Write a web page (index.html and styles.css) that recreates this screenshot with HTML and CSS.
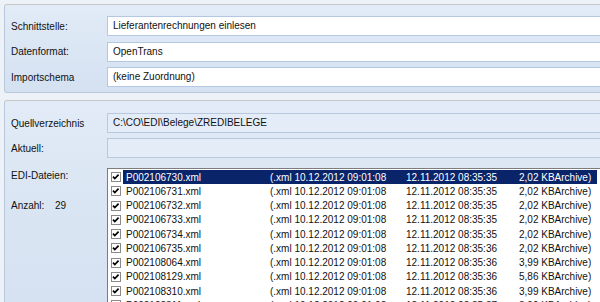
FILE: index.html
```html
<!DOCTYPE html>
<html lang="de">
<head>
    <meta charset="UTF-8">
    <title>EDI Import</title>
    <link rel="stylesheet" href="styles.css">
</head>
<body>
    <div class="window">
        <section class="panel panel-settings">
            <div class="field-row">
                <label>Schnittstelle:</label>
                <div class="field">Lieferantenrechnungen einlesen</div>
            </div>
            <div class="field-row">
                <label>Datenformat:</label>
                <div class="field">OpenTrans</div>
            </div>
            <div class="field-row">
                <label>Importschema</label>
                <div class="field">(keine Zuordnung)</div>
            </div>
        </section>

        <section class="panel panel-files">
            <div class="field-row">
                <label>Quellverzeichnis</label>
                <div class="field readonly">C:\CO\EDI\Belege\ZREDIBELEGE</div>
            </div>
            <div class="field-row">
                <label>Aktuell:</label>
                <div class="field readonly"></div>
            </div>
            <div class="files-row">
                <div class="files-side">
                    <div class="side-line">EDI-Dateien:</div>
                    <div class="side-line count">
                        <span class="count-label">Anzahl:</span>
                        <span>29</span>
                    </div>
                </div>
                <ul class="file-list" id="fileList"></ul>
            </div>
        </section>
    </div>

    <script>
        const files = [
            ['P002106730.xml', '08:35:35', '2,02', true],
            ['P002106731.xml', '08:35:35', '2,02', true],
            ['P002106732.xml', '08:35:35', '2,02', true],
            ['P002106733.xml', '08:35:35', '2,02', true],
            ['P002106734.xml', '08:35:35', '2,02', true],
            ['P002106735.xml', '08:35:36', '2,02', true],
            ['P002108064.xml', '08:35:36', '3,99', true],
            ['P002108129.xml', '08:35:36', '5,86', true],
            ['P002108310.xml', '08:35:36', '3,99', true],
            ['P002108311.xml', '08:35:37', '3,99', false]
        ];

        const checkMark = '<path d="M2 4.6 L3.8 6.6 L7.6 2.6" fill="none" stroke="#000" stroke-width="1.7"/>';

        const list = document.getElementById('fileList');
        files.forEach(([name, time, size, checked], i) => {
            const li = document.createElement('li');
            li.className = 'file-item' + (i === 0 ? ' selected' : '');
            li.innerHTML =
                '<svg class="check" width="10" height="10" viewBox="0 0 10 10">' +
                '<rect x="0.5" y="0.5" width="9" height="9" fill="#fff" stroke="#8a8a8a"/>' +
                (checked ? checkMark : '') + '</svg>' +
                '<div class="file-text">' +
                '<span>' + name + '</span>' +
                '<span>(.xml 10.12.2012 09:01:08</span>' +
                '<span>12.11.2012 ' + time + '</span>' +
                '<span>' + size + ' KBArchive)</span>' +
                '</div>';
            list.appendChild(li);
        });
    </script>
</body>
</html>
```

FILE: styles.css
```css
html, body {
    overflow: hidden;
}

body {
    margin: 0;
    background-color: #edf2f9;
    font-family: "Liberation Sans", Arial, sans-serif;
    font-size: 10px;
    color: #111;
}

.window {
    width: 640px;
    padding: 4px 0 0 4px;
    display: flex;
    flex-direction: column;
    gap: 7px;
}

.panel {
    border: 1px solid #b9c7da;
    border-top-color: #c6c8c6;
    border-radius: 3px;
    background: linear-gradient(#e2ebf7, #d4e1f1);
    padding: 11px 0 5px 6px;
    display: flex;
    flex-direction: column;
}

.panel-settings {
    gap: 5.5px;
}

.panel-files {
    padding-top: 12px;
    gap: 5px;
    height: 240px;
    background: linear-gradient(#e2ebf7 0%, #dae5f3 40%, #d3e0f0 100%);
}

.field-row {
    display: flex;
    align-items: center;
    height: 20px;
}

.field-row label {
    width: 96px;
    flex: none;
}

.field {
    flex: 1;
    height: 20px;
    box-sizing: border-box;
    border: 1px solid #b4c8e4;
    background-color: #fff;
    padding: 0 5px;
    line-height: 18px;
    white-space: nowrap;
}

.field.readonly {
    background-color: #e4ecf8;
    border-color: #b8c9df;
}

.files-row {
    display: flex;
    margin-top: 5px;
}

.files-side {
    width: 96px;
    flex: none;
    padding-top: 1px;
}

.side-line {
    height: 14.25px;
    line-height: 14.25px;
}

.count {
    margin-top: 16px;
    display: flex;
}

.count-label {
    width: 44px;
}

.file-list {
    list-style: none;
    margin: 0;
    width: 510px;
    height: 200px;
    box-sizing: border-box;
    padding: 1px 20px 0 3px;
    border-top: 1px solid #7c7c7c;
    border-left: 1px solid #7c7c7c;
    background-color: #fff;
}

.file-item {
    display: flex;
    align-items: center;
    height: 14.25px;
}

.check {
    flex: none;
    margin-right: 2px;
}

.file-text {
    flex: 1;
    height: 100%;
    display: grid;
    grid-template-columns: 144px 136px 113px auto;
    align-items: center;
    padding-left: 3px;
    white-space: nowrap;
}

.selected .file-text {
    background-color: #0a246a;
    color: #fff;
}
```
